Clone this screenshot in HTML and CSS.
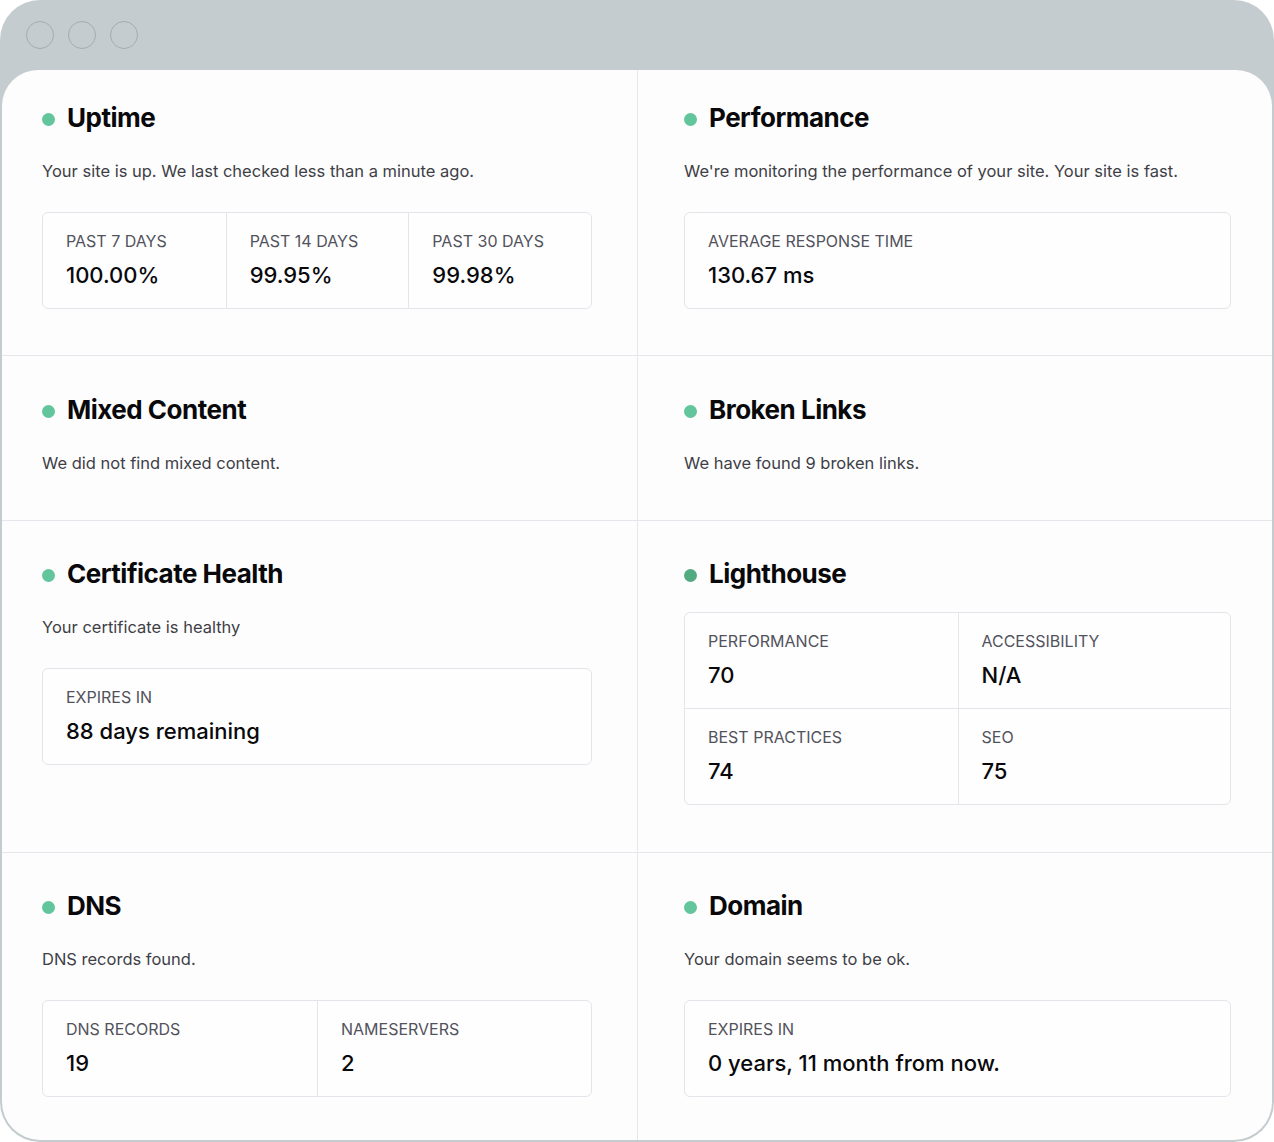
FILE: index.html
```html
<!DOCTYPE html>
<html lang="en">
<head>
<meta charset="utf-8">
<title>Site monitor</title>
<link rel="stylesheet" href="styles.css">
</head>
<body>
<div class="window">
  <div class="titlebar">
    <span class="light"></span><span class="light"></span><span class="light"></span>
  </div>
  <div class="panel">
    <section class="cell left first">
      <h2 class="title"><span class="dot"></span>Uptime</h2>
      <p class="desc">Your site is up. We last checked less than a minute ago.</p>
      <div class="stats cols-3">
        <div class="stat"><div class="label">PAST 7 DAYS</div><div class="value">100.00%</div></div>
        <div class="stat"><div class="label">PAST 14 DAYS</div><div class="value">99.95%</div></div>
        <div class="stat"><div class="label">PAST 30 DAYS</div><div class="value">99.98%</div></div>
      </div>
    </section>
    <section class="cell right first">
      <h2 class="title"><span class="dot"></span>Performance</h2>
      <p class="desc">We're monitoring the performance of your site. Your site is fast.</p>
      <div class="stats cols-1">
        <div class="stat"><div class="label">AVERAGE RESPONSE TIME</div><div class="value">130.67 ms</div></div>
      </div>
    </section>

    <section class="cell left second">
      <h2 class="title"><span class="dot"></span>Mixed Content</h2>
      <p class="desc">We did not find mixed content.</p>
    </section>
    <section class="cell right second">
      <h2 class="title"><span class="dot"></span>Broken Links</h2>
      <p class="desc">We have found 9 broken links.</p>
    </section>

    <section class="cell left">
      <h2 class="title"><span class="dot"></span>Certificate Health</h2>
      <p class="desc">Your certificate is healthy</p>
      <div class="stats cols-1">
        <div class="stat"><div class="label">EXPIRES IN</div><div class="value">88 days remaining</div></div>
      </div>
    </section>
    <section class="cell right">
      <h2 class="title tight"><span class="dot dark"></span>Lighthouse</h2>
      <div class="stats cols-2 rows-2">
        <div class="stat"><div class="label">PERFORMANCE</div><div class="value">70</div></div>
        <div class="stat"><div class="label">ACCESSIBILITY</div><div class="value">N/A</div></div>
        <div class="stat"><div class="label">BEST PRACTICES</div><div class="value">74</div></div>
        <div class="stat"><div class="label">SEO</div><div class="value">75</div></div>
      </div>
    </section>

    <section class="cell left last">
      <h2 class="title"><span class="dot"></span>DNS</h2>
      <p class="desc">DNS records found.</p>
      <div class="stats cols-2">
        <div class="stat"><div class="label">DNS RECORDS</div><div class="value">19</div></div>
        <div class="stat"><div class="label">NAMESERVERS</div><div class="value">2</div></div>
      </div>
    </section>
    <section class="cell right last">
      <h2 class="title"><span class="dot"></span>Domain</h2>
      <p class="desc">Your domain seems to be ok.</p>
      <div class="stats cols-1">
        <div class="stat"><div class="label">EXPIRES IN</div><div class="value">0 years, 11 month from now.</div></div>
      </div>
    </section>
  </div>
</div>
</body>
</html>
```

FILE: styles.css
```css
* { box-sizing: border-box; }
html, body { margin: 0; padding: 0; background: #ffffff; }
body { font-family: Inter, "Noto Sans", "Liberation Sans", sans-serif; color: #09090b; }

.window {
  width: 1274px;
  height: 1142px;
  background: #c5cccf;
  border-radius: 40px;
  display: flex;
  flex-direction: column;
  overflow: hidden;
}
.titlebar {
  height: 70px;
  flex: none;
  display: flex;
  align-items: center;
  gap: 14px;
  padding: 0 0 0 26px;
}
.light {
  width: 28px;
  height: 28px;
  border-radius: 50%;
  border: 1.5px solid #a4abae;
}
.panel {
  flex: 1;
  margin: 0 2px 2px 2px;
  background: #fdfdfe;
  border-radius: 36px 36px 38px 38px;
  overflow: hidden;
  display: grid;
  grid-template-columns: 636px 634px;
  grid-template-rows: 286px 165px 332px 1fr;
}
.cell {
  padding: 37px 0 0 0;
  border-bottom: 1px solid #e7e6ec;
}
.cell.left { padding-left: 40px; padding-right: 45px; border-right: 1px solid #e7e6ec; }
.cell.right { padding-left: 46px; padding-right: 41px; }
.cell.first { padding-top: 32px; }
.cell.second { padding-top: 38px; }
.cell.last { border-bottom: none; }

.title {
  margin: 0;
  display: flex;
  align-items: center;
  font-size: 26px;
  line-height: 32px;
  font-weight: 700;
  letter-spacing: -0.5px;
  color: #09090b;
}
.dot {
  width: 13px;
  height: 13px;
  border-radius: 50%;
  background: #63c59b;
  margin: 3px 12px 0 0;
  flex: none;
}
.dot.dark { background: #52aa80; }

.desc {
  margin: 25px 0 0 0;
  font-size: 16.5px;
  line-height: 24px;
  color: #3f3f46;
}
.desc + .stats { margin-top: 29px; }
.title.tight + .stats { margin-top: 22px; }

.stats {
  display: grid;
  border: 1px solid #e5e4ea;
  border-radius: 6px;
  background: #fefeff;
}
.cols-1 { grid-template-columns: 1fr; }
.cols-2 { grid-template-columns: 1fr 1fr; }
.cols-3 { grid-template-columns: 1fr 1fr 1fr; }
.stat {
  padding: 16px 23px 19px 23px;
  border-left: 1px solid #e5e4ea;
}
.stat:first-child { border-left: none; }
.rows-2 .stat:nth-child(3) { border-left: none; }
.rows-2 .stat:nth-child(-n+2) { border-bottom: 1px solid #e5e4ea; }
.label {
  font-size: 16px;
  line-height: 24px;
  color: #52525b;
  font-weight: 400;
}
.value {
  margin-top: 8px;
  font-size: 22px;
  line-height: 28px;
  font-weight: 500;
  color: #09090b;
}
```
